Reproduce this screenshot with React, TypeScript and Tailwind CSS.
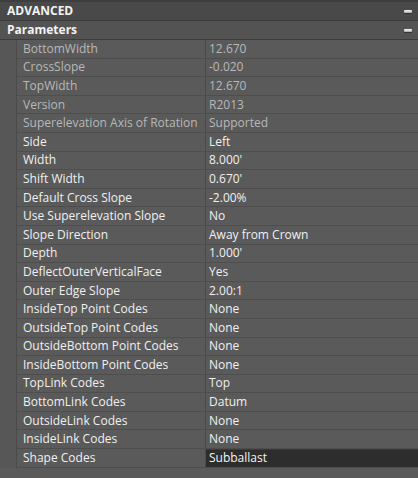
import React from "react";

type Row = { label: string; value: string; dim?: boolean; sel?: boolean };

const rows: Row[] = [
  { label: "BottomWidth", value: "12.670", dim: true },
  { label: "CrossSlope", value: "-0.020", dim: true },
  { label: "TopWidth", value: "12.670", dim: true },
  { label: "Version", value: "R2013", dim: true },
  { label: "Superelevation Axis of Rotation", value: "Supported", dim: true },
  { label: "Side", value: "Left" },
  { label: "Width", value: "8.000'" },
  { label: "Shift Width", value: "0.670'" },
  { label: "Default Cross Slope", value: "-2.00%" },
  { label: "Use Superelevation Slope", value: "No" },
  { label: "Slope Direction", value: "Away from Crown" },
  { label: "Depth", value: "1.000'" },
  { label: "DeflectOuterVerticalFace", value: "Yes" },
  { label: "Outer Edge Slope", value: "2.00:1" },
  { label: "InsideTop Point Codes", value: "None" },
  { label: "OutsideTop Point Codes", value: "None" },
  { label: "OutsideBottom Point Codes", value: "None" },
  { label: "InsideBottom Point Codes", value: "None" },
  { label: "TopLink Codes", value: "Top" },
  { label: "BottomLink Codes", value: "Datum" },
  { label: "OutsideLink Codes", value: "None" },
  { label: "InsideLink Codes", value: "None" },
  { label: "Shape Codes", value: "Subballast", sel: true },
];

function Minus() {
  return (
    <div className="w-[8px] h-[3px] rounded-[1px] bg-gradient-to-b from-[#ffffff] to-[#a8a8a8] shadow-[0_1px_0_#333]" />
  );
}

export default function App() {
  return (
    <div
      className="w-[418px] h-[478px] bg-[#5a5a5a] overflow-hidden text-[12px] leading-none"
      style={{ fontFamily: '"Open Sans", "Noto Sans", sans-serif' }}
    >
      <div className="h-[2px] bg-[#3e3e3e]" />
      <div className="h-[19px] bg-[#494949] border-b border-[#3a3a3a] flex items-center justify-between pl-[7px] pr-[6px]">
        <span className="font-bold text-[#f2f2f2]">ADVANCED</span>
        <Minus />
      </div>
      <div className="h-[19px] bg-[#535353] border-b border-[#3c3c3c] flex items-center justify-between pl-[7px] pr-[6px]">
        <span className="font-bold text-[#f2f2f2]">Parameters</span>
        <Minus />
      </div>
      <div className="flex">
        <div className="w-[17px] border-r border-[#4b4b4b] bg-[#575757]" />
        <div className="flex-1 flex flex-col">
          {rows.map((r, i) => (
            <div
              key={i}
              className="h-[18.6px] flex border-b border-[#4e4e4e]"
            >
              <div
                className={`w-[189px] border-r border-[#4b4b4b] flex items-center pl-[6px] ${
                  r.dim ? "text-[#b8b8b8]" : "text-[#f0f0f0]"
                }`}
              >
                {r.label}
              </div>
              {r.sel ? (
                <div className="flex-1 flex items-center pl-[3px] bg-[#2d2d2d] border-t border-[#3a3a3a] text-[#f4f4f4]">
                  {r.value}
                </div>
              ) : (
                <div
                  className={`flex-1 flex items-center pl-[3px] ${
                    r.dim ? "text-[#b8b8b8]" : "text-[#f0f0f0]"
                  }`}
                >
                  {r.value}
                </div>
              )}
            </div>
          ))}
        </div>
      </div>
    </div>
  );
}
